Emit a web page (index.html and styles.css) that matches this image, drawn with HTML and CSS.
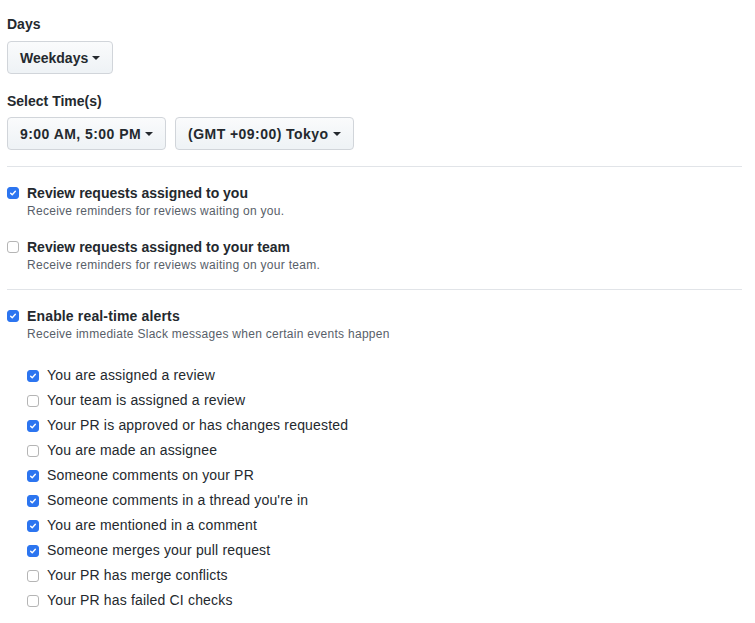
FILE: index.html
```html
<!DOCTYPE html>
<html>
<head>
<meta charset="utf-8">
<link rel="stylesheet" href="styles.css">
</head>
<body>
<div class="page">
  <div class="label label-days">Days</div>
  <div class="btn-row">
    <button class="btn">Weekdays <span class="caret"></span></button>
  </div>
  <div class="label label-time">Select Time(s)</div>
  <div class="btn-row">
    <button class="btn btn-num">9:00 AM, 5:00 PM <span class="caret"></span></button>
    <button class="btn btn-num">(GMT +09:00) Tokyo <span class="caret"></span></button>
  </div>
  <hr class="divider">
  <div class="option">
    <div class="option-head"><span class="cb checked"><svg viewBox="0 0 12 12" width="12" height="12"><path d="M3.2 6.2 L5.1 8.1 L8.8 3.9" fill="none" stroke="#fff" stroke-width="1.7" stroke-linecap="round" stroke-linejoin="round"/></svg></span><span class="title">Review requests assigned to you</span></div>
    <div class="desc">Receive reminders for reviews waiting on you.</div>
  </div>
  <div class="option option-2">
    <div class="option-head"><span class="cb"></span><span class="title">Review requests assigned to your team</span></div>
    <div class="desc">Receive reminders for reviews waiting on your team.</div>
  </div>
  <hr class="divider divider-2">
  <div class="option">
    <div class="option-head"><span class="cb checked"><svg viewBox="0 0 12 12" width="12" height="12"><path d="M3.2 6.2 L5.1 8.1 L8.8 3.9" fill="none" stroke="#fff" stroke-width="1.7" stroke-linecap="round" stroke-linejoin="round"/></svg></span><span class="title title-alerts">Enable real-time alerts</span></div>
    <div class="desc">Receive immediate Slack messages when certain events happen</div>
  </div>
  <ul class="sublist">
    <li><span class="cb checked"><svg viewBox="0 0 12 12" width="12" height="12"><path d="M3.2 6.2 L5.1 8.1 L8.8 3.9" fill="none" stroke="#fff" stroke-width="1.7" stroke-linecap="round" stroke-linejoin="round"/></svg></span>You are assigned a review</li>
    <li><span class="cb"></span>Your team is assigned a review</li>
    <li><span class="cb checked"><svg viewBox="0 0 12 12" width="12" height="12"><path d="M3.2 6.2 L5.1 8.1 L8.8 3.9" fill="none" stroke="#fff" stroke-width="1.7" stroke-linecap="round" stroke-linejoin="round"/></svg></span>Your PR is approved or has changes requested</li>
    <li><span class="cb"></span>You are made an assignee</li>
    <li><span class="cb checked"><svg viewBox="0 0 12 12" width="12" height="12"><path d="M3.2 6.2 L5.1 8.1 L8.8 3.9" fill="none" stroke="#fff" stroke-width="1.7" stroke-linecap="round" stroke-linejoin="round"/></svg></span>Someone comments on your PR</li>
    <li><span class="cb checked"><svg viewBox="0 0 12 12" width="12" height="12"><path d="M3.2 6.2 L5.1 8.1 L8.8 3.9" fill="none" stroke="#fff" stroke-width="1.7" stroke-linecap="round" stroke-linejoin="round"/></svg></span>Someone comments in a thread you're in</li>
    <li><span class="cb checked"><svg viewBox="0 0 12 12" width="12" height="12"><path d="M3.2 6.2 L5.1 8.1 L8.8 3.9" fill="none" stroke="#fff" stroke-width="1.7" stroke-linecap="round" stroke-linejoin="round"/></svg></span>You are mentioned in a comment</li>
    <li><span class="cb checked"><svg viewBox="0 0 12 12" width="12" height="12"><path d="M3.2 6.2 L5.1 8.1 L8.8 3.9" fill="none" stroke="#fff" stroke-width="1.7" stroke-linecap="round" stroke-linejoin="round"/></svg></span>Someone merges your pull request</li>
    <li><span class="cb"></span>Your PR has merge conflicts</li>
    <li><span class="cb"></span>Your PR has failed CI checks</li>
  </ul>
</div>
</body>
</html>
```
FILE: styles.css
```css
* { box-sizing: border-box; }
html, body { margin: 0; padding: 0; background: #fff; }
body {
  font-family: "Liberation Sans", Arial, sans-serif;
  font-size: 14px;
  color: #24292e;
}
.page {
  width: 735px;
  margin-left: 7px;
  padding-top: 14px;
}
.label {
  font-weight: bold;
  font-size: 14px;
  line-height: 20px;
}
.label-days { margin-bottom: 7px; }
.label-time { margin-top: 17px; margin-bottom: 6px; }
.btn-row {
  display: flex;
  gap: 9px;
}
.btn {
  height: 33px;
  padding: 0 12px 0 12px;
  display: flex;
  align-items: center;
  gap: 4px;
  font-family: inherit;
  font-size: 14px;
  font-weight: bold;
  color: #24292e;
  background: linear-gradient(180deg, #fafbfc 0%, #eff3f6 90%);
  border: 1px solid #d1d5da;
  border-radius: 4px;
}
.btn-num { letter-spacing: 0.45px; }
.caret {
  width: 0;
  height: 0;
  border-left: 4px solid transparent;
  border-right: 4px solid transparent;
  border-top: 4px solid #24292e;
  margin-top: 1px;
}
.divider {
  border: 0;
  height: 1px;
  background: #e1e4e8;
  margin: 16px 0 0 0;
}
.option { margin-top: 16px; }
.option-2 { margin-top: 18px; }
.divider-2 { margin-top: 16px; }
.option-head {
  display: flex;
  align-items: center;
  line-height: 20px;
}
.title {
  font-weight: bold;
  font-size: 14px;
}
.title-alerts { letter-spacing: 0.15px; }
.desc {
  font-size: 12px;
  line-height: 16px;
  color: #586069;
  padding-left: 20px;
  letter-spacing: 0.28px;
}
.cb {
  width: 12px;
  height: 12px;
  flex: none;
  border-radius: 3px;
  border: 1px solid #b5b5b5;
  background: #fff;
  margin-right: 8px;
  display: inline-flex;
  align-items: center;
  justify-content: center;
}
.cb.checked {
  background: #2c75f0;
  border-color: #2c75f0;
}
.cb svg { display: block; }
.sublist {
  list-style: none;
  margin: 20px 0 0 0;
  padding: 0 0 0 20px;
}
.sublist li {
  display: flex;
  align-items: center;
  height: 25px;
  font-size: 14px;
  letter-spacing: 0.17px;
}
.sublist .cb { margin-top: 3px; }
```
